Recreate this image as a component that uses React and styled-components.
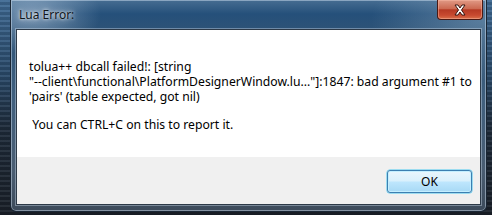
import React from "react";
import styled, { createGlobalStyle } from "styled-components";

const GlobalStyle = createGlobalStyle`
  html, body {
    margin: 0;
    padding: 0;
    width: 492px;
    height: 215px;
    overflow: hidden;
    background: #1b2430;
  }
`;

const Desktop = styled.div`
  width: 492px;
  height: 215px;
  display: flex;
  padding-left: 10px;
  box-sizing: border-box;
  background:
    repeating-linear-gradient(
      180deg,
      rgba(255, 255, 255, 0.06) 0px,
      rgba(255, 255, 255, 0.06) 2px,
      rgba(0, 0, 0, 0.12) 2px,
      rgba(0, 0, 0, 0.12) 5px
    ),
    linear-gradient(180deg, #3f6a94 0%, #2a4a6a 35%, #1e2b3a 60%, #1a2029 100%);
`;

const Window = styled.div`
  width: 477px;
  height: 212px;
  box-sizing: border-box;
  display: flex;
  flex-direction: column;
  padding: 0 5px 6px 5px;
  border: 1px solid #1a2634;
  border-top: none;
  border-radius: 0 0 6px 6px;
  box-shadow: inset 0 0 0 1px rgba(220, 235, 250, 0.45);
  background:
    radial-gradient(ellipse 70px 40px at 20px 14px, rgba(200, 218, 236, 0.5), transparent),
    radial-gradient(ellipse 110px 60px at 470px 20px, rgba(160, 188, 210, 0.4), transparent),
    linear-gradient(180deg, #466d92 0px, #25507a 14px, #2d5377 30px, #41607e 100px, #4a5d72 170px, #3c4a5a 212px);
  font-family: "Noto Sans", "Open Sans", sans-serif;
`;

const TitleBar = styled.div`
  height: 29px;
  flex: none;
  display: flex;
  align-items: flex-start;
  justify-content: space-between;
`;

const Title = styled.span`
  margin: 6px 0 0 3px;
  font-size: 12px;
  color: #10161c;
  text-shadow: 0 0 6px rgba(255, 255, 255, 0.9), 0 0 3px rgba(255, 255, 255, 0.9);
`;

const CloseButton = styled.div`
  width: 46px;
  height: 20px;
  margin-right: -2px;
  box-sizing: border-box;
  display: flex;
  align-items: center;
  justify-content: center;
  border: 1px solid #4a1a14;
  border-top: none;
  border-radius: 0 0 4px 4px;
  box-shadow: inset 0 0 0 1px rgba(255, 190, 170, 0.45);
  background: linear-gradient(180deg, #e09a86 0%, #cc6a52 45%, #b63a24 52%, #c84a30 80%, #d8704a 100%);
`;

const Client = styled.div`
  flex: 1;
  display: flex;
  flex-direction: column;
  border: 1px solid #2c3947;
  box-shadow: 0 0 0 1px rgba(210, 225, 240, 0.4);
`;

const MessageArea = styled.div`
  height: 127px;
  background: #ffffff;
  padding: 29px 0 0 12px;
  box-sizing: border-box;
  font-family: "Noto Sans", "Open Sans", sans-serif;
  font-size: 12.2px;
  line-height: 15px;
  color: #000;
`;

const Line = styled.div`
  white-space: pre;
  margin-top: ${(p) => (p.$gap ? "13px" : "0")};
`;

const Footer = styled.div`
  flex: 1;
  background: #f0f0f0;
  display: flex;
  justify-content: flex-end;
  align-items: flex-start;
  padding: 13px 8px 0 0;
`;

const OkButton = styled.button`
  width: 85px;
  height: 23px;
  box-sizing: border-box;
  border: 1px solid #3c7fb1;
  border-radius: 3px;
  box-shadow: inset 0 0 0 1px #c4efff, 0 0 0 0.5px #48c8f0;
  background: linear-gradient(180deg, #eaf6fd 0%, #d9f0fc 48%, #bee6fd 52%, #a7d9f5 100%);
  font-family: "Noto Sans", "Open Sans", sans-serif;
  font-size: 12px;
  color: #000;
  padding: 0;
`;

function CloseGlyph() {
  return (
    <svg width="14" height="12" viewBox="0 0 14 12">
      <path
        d="M2 1 L5 1 L7 4 L9 1 L12 1 L8.5 6 L12 11 L9 11 L7 8 L5 11 L2 11 L5.5 6 Z"
        fill="#ffffff"
        stroke="#3a1610"
        strokeWidth="1"
        strokeLinejoin="round"
      />
    </svg>
  );
}

export default function App() {
  return (
    <>
      <GlobalStyle />
      <Desktop>
        <Window>
          <TitleBar>
            <Title>Lua Error:</Title>
            <CloseButton>
              <CloseGlyph />
            </CloseButton>
          </TitleBar>
          <Client>
            <MessageArea>
              <Line>tolua++ dbcall failed!: [string</Line>
              <Line>"--client\functional\PlatformDesignerWindow.lu..."]:1847: bad argument #1 to</Line>
              <Line>'pairs' (table expected, got nil)</Line>
              <Line $gap> You can CTRL+C on this to report it.</Line>
            </MessageArea>
            <Footer>
              <OkButton>OK</OkButton>
            </Footer>
          </Client>
        </Window>
      </Desktop>
    </>
  );
}
